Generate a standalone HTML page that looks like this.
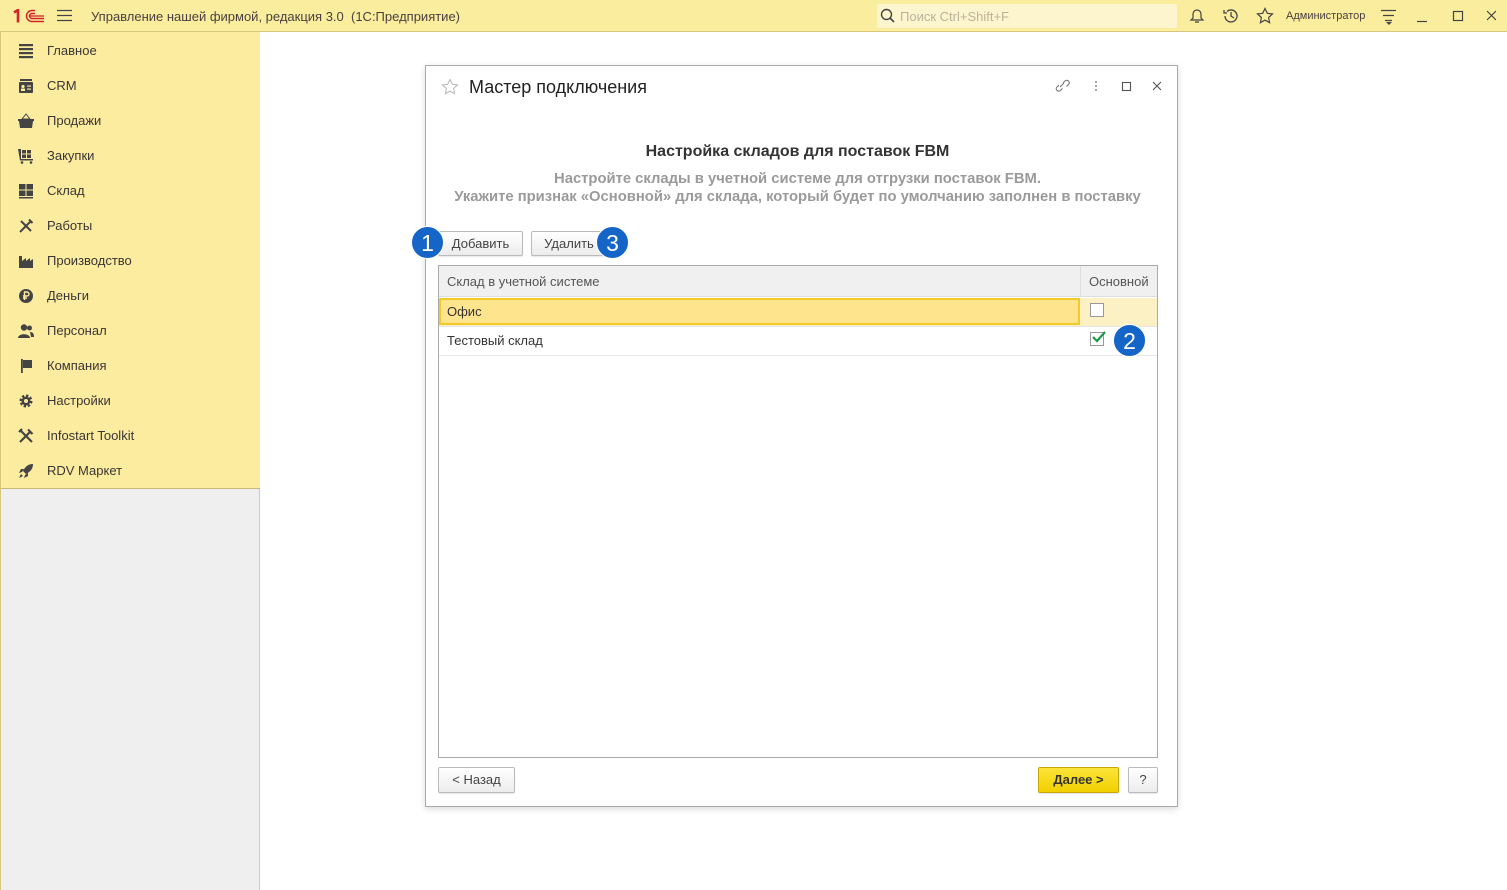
<!DOCTYPE html>
<html><head><meta charset="utf-8"><style>
*{box-sizing:border-box;margin:0;padding:0}
body{width:1507px;height:890px;overflow:hidden;font-family:"Liberation Sans",Arial,sans-serif;font-size:13px;color:#333;background:#fff;position:relative}
.top{position:absolute;left:0;top:0;width:1507px;height:32px;background:#fbed9e;border-bottom:1px solid #d8c77e}
.side{position:absolute;left:0;top:32px;width:260px;height:858px;background:#efefef;border-right:1px solid #c9c9c9;border-left:1px solid #d8c77e}
.menu{position:absolute;left:0;top:0;width:259px;height:457px;background:#fbec9f;border-bottom:1px solid #c8b87a}
.mi{position:absolute;left:46px;font-size:13px;color:#3b3535}
.ic{position:absolute;left:17px;width:16px;height:16px}
.dlg{position:absolute;left:425px;top:65px;width:753px;height:742px;border:1px solid #aaa;background:#fff;box-shadow:0 2px 6px rgba(0,0,0,.15)}
.btn{position:absolute;height:25px;border:1px solid #bbb;border-radius:2px;background:linear-gradient(#fff,#ececec);font-size:13px;color:#444;text-align:center;line-height:23px;box-shadow:0 1px 1px rgba(0,0,0,.1)}
.badge{position:absolute;width:33px;height:33px;border-radius:50%;background:#1565c8;color:#fff;font-size:23px;text-align:center;line-height:33px;border:1px solid #fff}
.cb{position:absolute;width:14px;height:14px;border:1px solid #999;background:#fff}
</style></head><body>
<div class="top">
 <svg style="position:absolute;left:13px;top:9px" width="32" height="14" viewBox="0 0 32 14"><path d="M1 3.5l4-2.5v12.5" stroke="#d4232b" stroke-width="2.6" fill="none"/><path d="M31 12.5H19a5.5 5.5 0 0 1 0-11h3" stroke="#d4232b" stroke-width="1.5" fill="none"/><path d="M31 9.5H19a2.5 2.5 0 0 1 0-5h3" stroke="#d4232b" stroke-width="1.5" fill="none"/><path d="M17 7h14" stroke="#d4232b" stroke-width="1.3"/></svg>
 <svg style="position:absolute;left:57px;top:9px" width="15" height="13"><path d="M0 1.5h15M0 6.5h15M0 11.5h15" stroke="#444" stroke-width="1.3"/></svg>
 <div style="position:absolute;left:91px;top:9px;font-size:13px;color:#4a4040">Управление нашей фирмой, редакция 3.0 &nbsp;(1С:Предприятие)</div>
 <div style="position:absolute;left:877px;top:4px;width:300px;height:24px;background:#fdf5cd;border-radius:2px"></div>
 <svg style="position:absolute;left:880px;top:8px" width="16" height="16"><circle cx="6.5" cy="6.5" r="5" stroke="#444" stroke-width="1.4" fill="none"/><path d="M10 10l4 4" stroke="#444" stroke-width="1.6"/></svg>
 <div style="position:absolute;left:900px;top:9px;color:#b9b39a;font-size:13px">Поиск Ctrl+Shift+F</div>
 <svg style="position:absolute;left:1188px;top:8px" width="18" height="17" fill="none" stroke="#444" stroke-width="1.2"><path d="M3 12h12l-2-2V6a4 4 0 0 0-8 0v4z M7 14h4"/></svg>
 <svg style="position:absolute;left:1222px;top:7px" width="18" height="18" fill="none" stroke="#444" stroke-width="1.3"><path d="M3 9a6 6 0 1 0 2-4.5M2 3v3h3M9 5v4l3 2"/></svg>
 <svg style="position:absolute;left:1256px;top:7px" width="18" height="18" fill="none" stroke="#444" stroke-width="1.2"><path d="M9 1.5l2.3 4.8 5.2.6-3.9 3.6 1 5.2L9 13.1l-4.6 2.6 1-5.2-3.9-3.6 5.2-.6z"/></svg>
 <div style="position:absolute;left:1286px;top:10px;font-size:11px;color:#4a4040">Администратор</div>
 <svg style="position:absolute;left:1381px;top:9px" width="16" height="16" stroke="#444" stroke-width="1.2"><path d="M0 1.5h15M2 6.5h11M4 11.5h7"/><path d="M5 13h6l-3 3z" fill="#444" stroke="none"/></svg>
 <svg style="position:absolute;left:1416px;top:8px" width="80" height="16" stroke="#444" stroke-width="1.2" fill="none"><path d="M1 13.5h10"/><rect x="37.5" y="3.5" width="9" height="9"/><path d="M71 3l9 9M80 3l-9 9"/></svg>
</div>
<div class="side"><div class="menu">
 <svg class="ic" style="top:11px" viewBox="0 0 16 16" fill="#444"><rect x="1" y="1" width="14" height="2.2"/><rect x="1" y="5" width="14" height="2.2"/><rect x="1" y="9" width="14" height="2.2"/><rect x="1" y="13" width="14" height="2.2"/></svg><div class="mi" style="top:11px">Главное</div>
 <svg class="ic" style="top:46px" viewBox="0 0 16 16" fill="#444"><rect x="1" y="4" width="14" height="11" rx="1"/><rect x="2" y="1" width="12" height="2"/><circle cx="5" cy="8.5" r="1.6" fill="#fbec9f"/><rect x="3" y="10.5" width="4" height="2.5" fill="#fbec9f"/><rect x="9" y="7.5" width="4" height="1.2" fill="#fbec9f"/><rect x="9" y="10.5" width="4" height="1.2" fill="#fbec9f"/></svg><div class="mi" style="top:46px">CRM</div>
 <svg class="ic" style="top:81px" viewBox="0 0 16 16" fill="#444"><path d="M4 6l4-5 4 5z" fill="none" stroke="#444"/><rect x="0" y="6" width="16" height="2"/><path d="M1 8h14l-1 7H2z"/></svg><div class="mi" style="top:81px">Продажи</div>
 <svg class="ic" style="top:116px" viewBox="0 0 16 16" fill="#444"><path d="M0 1h3v10h12v1.5H2z"/><rect x="4" y="2" width="4" height="3.5"/><rect x="9" y="2" width="4" height="3.5"/><rect x="4" y="6.5" width="4" height="3.5"/><rect x="9" y="6.5" width="4" height="3.5"/><circle cx="4" cy="14.5" r="1.3"/><circle cx="13" cy="14.5" r="1.3"/></svg><div class="mi" style="top:116px">Закупки</div>
 <svg class="ic" style="top:151px" viewBox="0 0 16 16" fill="#444"><rect x="1" y="1" width="6.5" height="5.5"/><rect x="8.5" y="1" width="6.5" height="5.5"/><rect x="1" y="7.5" width="6.5" height="5.5"/><rect x="8.5" y="7.5" width="6.5" height="5.5"/><rect x="1" y="14" width="14" height="1.5"/></svg><div class="mi" style="top:151px">Склад</div>
 <svg class="ic" style="top:186px" viewBox="0 0 16 16" fill="none" stroke="#444" stroke-width="2"><path d="M2 14L13 3M3 3l10 10M11 1.5l3.5 3.5"/></svg><div class="mi" style="top:186px">Работы</div>
 <svg class="ic" style="top:221px" viewBox="0 0 16 16" fill="#444"><path d="M1 15V3h3v5l4-3v3l4-3v3l3-2v9z"/></svg><div class="mi" style="top:221px">Производство</div>
 <svg class="ic" style="top:256px" viewBox="0 0 16 16"><circle cx="8" cy="8" r="7" fill="#444"/><path d="M6.5 12V4h2.5a2 2 0 0 1 0 4H5M5 10h4" stroke="#fbec9f" stroke-width="1.4" fill="none"/></svg><div class="mi" style="top:256px">Деньги</div>
 <svg class="ic" style="top:291px" viewBox="0 0 16 16" fill="#444"><circle cx="6" cy="4.5" r="3.2"/><path d="M0 15c0-5 12-5 12 0z"/><circle cx="11.5" cy="5" r="2.5"/><path d="M12 9c3 0 4 2 4 5h-3z"/></svg><div class="mi" style="top:291px">Персонал</div>
 <svg class="ic" style="top:326px" viewBox="0 0 16 16" fill="#444"><rect x="3" y="1" width="1.8" height="14"/><path d="M5 2h9v8H5z"/></svg><div class="mi" style="top:326px">Компания</div>
 <svg class="ic" style="top:361px" viewBox="0 0 16 16"><circle cx="8" cy="8" r="5" fill="none" stroke="#444" stroke-width="3" stroke-dasharray="2.2 1.7"/><circle cx="8" cy="8" r="4.5" fill="#444"/><circle cx="8" cy="8" r="2" fill="#fbec9f"/></svg><div class="mi" style="top:361px">Настройки</div>
 <svg class="ic" style="top:396px" viewBox="0 0 16 16" fill="none" stroke="#444" stroke-width="2.2"><path d="M2 14L12 4M3 3l11 11M10 1.5l4.5 4.5M1 4l3-3"/></svg><div class="mi" style="top:396px">Infostart Toolkit</div>
 <svg class="ic" style="top:431px" viewBox="0 0 16 16" fill="#444"><path d="M15 1c-5 0-8 3-10 7l3 3c4-2 7-5 7-10zM4 9l-3 1 2-4h3zM7 12l-1 3 4-2v-3zM3 11l-2 4 4-2z"/></svg><div class="mi" style="top:431px">RDV Маркет</div>
</div></div>

<div class="dlg">
 <svg style="position:absolute;left:15px;top:12px" width="18" height="18" fill="none" stroke="#bbb" stroke-width="1.1"><path d="M9 1.5l2.3 4.8 5.2.6-3.9 3.6 1 5.2L9 13.1l-4.6 2.6 1-5.2-3.9-3.6 5.2-.6z"/></svg>
 <div style="position:absolute;left:43px;top:11px;font-size:18px;color:#222">Мастер подключения</div>
 <svg style="position:absolute;left:628px;top:12px" width="110" height="16" fill="none" stroke="#555" stroke-width="1.1"><path d="M6 9l4-4M5 7l-2 2a2.3 2.3 0 0 0 3.5 3.5l2-2M9 5l2-2a2.3 2.3 0 0 1 3.5 3.5l-2 2" stroke="#777"/><circle cx="42" cy="4" r=".9" fill="#666" stroke="none"/><circle cx="42" cy="8" r=".9" fill="#666" stroke="none"/><circle cx="42" cy="12" r=".9" fill="#666" stroke="none"/><rect x="68.5" y="4.5" width="8" height="8"/><path d="M99 4l8 8M107 4l-8 8"/></svg>
 <div style="position:absolute;left:-4px;width:751px;top:77px;text-align:center;font-size:16px;font-weight:bold;color:#333">Настройка складов для поставок FBM</div>
 <div style="position:absolute;left:-4px;width:751px;top:104px;text-align:center;font-size:14.8px;font-weight:bold;color:#9a9a9a;line-height:18px">Настройте склады в учетной системе для отгрузки поставок FBM.<br>Укажите признак «Основной» для склада, который будет по умолчанию заполнен в поставку</div>
 <div class="btn" style="left:12px;top:165px;width:85px">Добавить</div>
 <div class="btn" style="left:105px;top:165px;width:76px">Удалить</div>
 <div class="badge" style="left:-15px;top:160px">1</div>
 <div class="badge" style="left:170px;top:160px">3</div>
 <div style="position:absolute;left:12px;top:199px;width:720px;height:493px;border:1px solid #aaa;background:#fff">
  <div style="position:absolute;left:0;top:0;width:718px;height:31px;background:#f0f0f0;border-bottom:1px solid #ddd"></div>
  <div style="position:absolute;left:641px;top:0;width:1px;height:31px;background:#ddd"></div>
  <div style="position:absolute;left:8px;top:8px;color:#555">Склад в учетной системе</div>
  <div style="position:absolute;left:650px;top:8px;color:#555">Основной</div>
  <div style="position:absolute;left:0;top:32px;width:718px;height:28px;background:#fcf0c5"></div>
  <div style="position:absolute;left:0;top:32px;width:641px;height:27px;background:#fde48d;border:2px solid #f5c928"></div>
  <div style="position:absolute;left:8px;top:38px;color:#333">Офис</div>
  <div class="cb" style="left:651px;top:37px"></div>
  <div style="position:absolute;left:0;top:60px;width:718px;height:1px;background:#e6e6e6"></div>
  <div style="position:absolute;left:8px;top:67px;color:#333">Тестовый склад</div>
  <div class="cb" style="left:651px;top:66px"></div>
  <svg style="position:absolute;left:652px;top:64px" width="16" height="14"><path d="M2 7l4 4 8-9" stroke="#1a9c46" stroke-width="2.2" fill="none"/></svg>
  <div style="position:absolute;left:0;top:89px;width:718px;height:1px;background:#e6e6e6"></div>
  <div class="badge" style="left:674px;top:58px">2</div>
 </div>
 <div class="btn" style="left:12px;top:701px;width:77px;height:26px">&lt; Назад</div>
 <div class="btn" style="left:612px;top:701px;width:81px;height:26px;background:linear-gradient(#fbe439,#f2d000);border-color:#c8a800;font-weight:bold;color:#333">Далее &gt;</div>
 <div class="btn" style="left:702px;top:701px;width:30px;height:26px">?</div>
</div>
</body></html>
